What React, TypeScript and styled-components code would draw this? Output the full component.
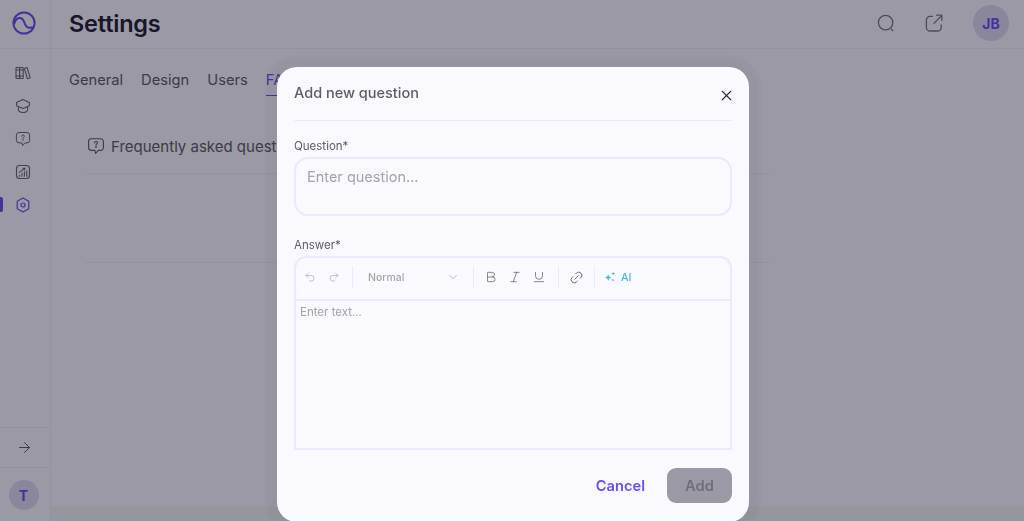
import React from "react";
import styled, { createGlobalStyle } from "styled-components";
import {
  ArrowRight,
  Bold,
  ChevronDown,
  Italic,
  Link2,
  Redo2,
  Underline,
  Undo2,
  X,
} from "lucide-react";

const GlobalStyle = createGlobalStyle`
  html, body {
    margin: 0;
    height: 100%;
    overflow: hidden;
    background: #faf9ff;
    font-family: "Inter", "Noto Sans", sans-serif;
  }
  * { box-sizing: border-box; }
`;

const tabs = ["General", "Design", "Users", "FAQ"];

// small hand drawn icons for the side bar and header
const BooksIcon = () => (
  <svg width="16" height="16" viewBox="0 0 16 16" fill="none" stroke="currentColor" strokeWidth="1.1">
    <rect x="1" y="2.5" width="3.6" height="11" rx="0.6" />
    <rect x="4.6" y="2.5" width="3.6" height="11" rx="0.6" />
    <path d="M9.4 3.4l2.6-1 3.2 10.4-2.8 1z" strokeLinejoin="round" />
    <path d="M1 5h7.2M1 11h7.2" />
  </svg>
);

const CapIcon = () => (
  <svg width="16" height="16" viewBox="0 0 16 16" fill="none" stroke="currentColor" strokeWidth="1.1" strokeLinejoin="round">
    <path d="M8 1.4l6.4 3.2v3.2L8 10.4 1.6 7.8V4.6z" />
    <path d="M3.4 8.8v2.8c0 1.8 2 2.9 4.6 2.9s4.6-1.1 4.6-2.9V8.8" />
  </svg>
);

const FaqIcon = ({ size = 16 }: { size?: number }) => (
  <svg width={size} height={size} viewBox="0 0 16 16" fill="none" stroke="currentColor" strokeWidth="1">
    <path d="M4 1.5h8a2.6 2.6 0 0 1 2.6 2.6v5.2A2.6 2.6 0 0 1 12 11.9h-1.8L7.6 14.6l-.6-2.7H4a2.6 2.6 0 0 1-2.6-2.6V4.1A2.6 2.6 0 0 1 4 1.5z" strokeLinejoin="round" />
    <path d="M6.7 5.2c.1-.8.7-1.2 1.4-1.2.8 0 1.3.5 1.3 1.1 0 1-1.4 1-1.4 2.1" strokeLinecap="round" />
    <circle cx="8" cy="8.9" r="0.3" fill="currentColor" />
  </svg>
);

const ChartIcon = () => (
  <svg width="16" height="16" viewBox="0 0 16 16" fill="none" stroke="currentColor" strokeWidth="1.1" strokeLinecap="round">
    <rect x="1.5" y="1.5" width="13" height="13" rx="3" />
    <path d="M4.5 12.2v-1M7 12.2V9.4M9.4 12.2V7.8M11.8 12.2V6.8" />
    <path d="M4.2 8.4l5.4-3.8M8 4.2h1.8v1.6" />
  </svg>
);

const GearIcon = () => (
  <svg width="16" height="16" viewBox="0 0 16 16" fill="none" stroke="currentColor" strokeWidth="1.2" strokeLinejoin="round">
    <path d="M8 1l5.8 3.3v7.4L8 15l-5.8-3.3V4.3z" />
    <circle cx="8" cy="8" r="2" />
  </svg>
);

const SearchIcon = () => (
  <svg width="18" height="18" viewBox="0 0 18 18" fill="none" stroke="currentColor" strokeWidth="1.3" strokeLinecap="round">
    <circle cx="8.6" cy="8.6" r="7.2" />
    <path d="M14.4 15.2l1.4 1.4" />
  </svg>
);

const ShareIcon = () => (
  <svg width="18" height="18" viewBox="0 0 18 18" fill="none" stroke="currentColor" strokeWidth="1.3" strokeLinecap="round" strokeLinejoin="round">
    <path d="M7.5 2.4H5a3.6 3.6 0 0 0-3.6 3.6v7.4A3.6 3.6 0 0 0 5 17h7.6a3.6 3.6 0 0 0 3.6-3.6V11" />
    <path d="M9 9.4L16.6 1.6M11.6 1.2h5.2v5" />
  </svg>
);

const Logo = () => (
  <svg width="24" height="24" viewBox="0 0 24 24" fill="none" stroke="#6b4ff5" strokeWidth="2">
    <circle cx="12" cy="12" r="10.6" />
    <path d="M2.2 13C3 8.5 6 6.5 8.5 7c3 .6 3.5 3.5 4.3 5.6 1.2 3.4 4.2 5.4 8.2 3.4" />
  </svg>
);

const SparkIcon = () => (
  <svg width="12" height="12" viewBox="0 0 12 12" fill="#4fb3e8">
    <path d="M4.2 3.4l1 2.2 2.2 1-2.2 1-1 2.2-1-2.2-2.2-1 2.2-1z" />
    <path d="M9.2.8l.6 1.2 1.2.6-1.2.6-.6 1.2-.6-1.2-1.2-.6 1.2-.6z" />
    <path d="M9 7.4l.5 1 1 .5-1 .5-.5 1-.5-1-1-.5 1-.5z" />
  </svg>
);

function App() {
  return (
    <>
      <GlobalStyle />
      <Shell>
        <Sidebar>
          <LogoBox>
            <Logo />
          </LogoBox>
          <SideNav>
            <SideItem><BooksIcon /></SideItem>
            <SideItem><CapIcon /></SideItem>
            <SideItem><FaqIcon /></SideItem>
            <SideItem><ChartIcon /></SideItem>
            <SideItem $active><GearIcon /></SideItem>
          </SideNav>
          <Collapse>
            <ArrowRight size={17} strokeWidth={1.3} />
          </Collapse>
          <UserBox>
            <Avatar $size={30}>T</Avatar>
          </UserBox>
        </Sidebar>
        <Main>
          <Header>
            <Title>Settings</Title>
            <HeaderTools>
              <SearchIcon />
              <ShareIcon />
              <Avatar $size={36}>JB</Avatar>
            </HeaderTools>
          </Header>
          <TabRow>
            {tabs.map((t) => (
              <Tab key={t} $active={t === "FAQ"}>{t}</Tab>
            ))}
          </TabRow>
          <FaqSection>
            <FaqHeading>
              <FaqIcon size={18} />
              Frequently asked questions
            </FaqHeading>
            <FaqRow />
          </FaqSection>
          <BottomBand />
        </Main>
      </Shell>

      <Overlay>
        <Modal>
          <ModalHead>
            <ModalTitle>Add new question</ModalTitle>
            <CloseButton>
              <X size={17} strokeWidth={1.6} />
            </CloseButton>
          </ModalHead>

          <Label>Question*</Label>
          <QuestionInput placeholder="Enter question..." />

          <AnswerLabel>Answer*</AnswerLabel>
          <Editor>
            <Toolbar>
              <ToolGroup $width={57} $pad={8} $gap={12}>
                <Undo2 size={12} strokeWidth={1.3} />
                <Redo2 size={12} strokeWidth={1.3} />
              </ToolGroup>
              <FormatSelect>
                Normal
                <ChevronDown size={14} strokeWidth={1.3} />
              </FormatSelect>
              <ToolGroup $width={85} $pad={10} $gap={10} $dark>
                <Bold size={14} strokeWidth={1.4} />
                <Italic size={14} strokeWidth={1.4} />
                <Underline size={14} strokeWidth={1.4} />
              </ToolGroup>
              <ToolGroup $width={36} $pad={10} $gap={0} $dark>
                <Link2 size={15} strokeWidth={1.5} style={{ transform: "rotate(-45deg)" }} />
              </ToolGroup>
              <AiButton>
                <SparkIcon />
                AI
              </AiButton>
            </Toolbar>
            <EditorBody placeholder="Enter text..." />
          </Editor>

          <Footer>
            <CancelButton>Cancel</CancelButton>
            <AddButton disabled>Add</AddButton>
          </Footer>
        </Modal>
      </Overlay>
    </>
  );
}

export default App;

const Shell = styled.div`
  display: flex;
  height: 521px;
  width: 1024px;
  background: #faf9ff;
`;

const Sidebar = styled.aside`
  width: 51px;
  flex: none;
  display: flex;
  flex-direction: column;
  border-right: 1px solid #efedf8;
`;

const LogoBox = styled.div`
  height: 49px;
  display: flex;
  align-items: center;
  justify-content: center;
  padding-right: 2px;
  padding-bottom: 2px;
  border-bottom: 1px solid #efedf8;
`;

const SideNav = styled.nav`
  flex: 1;
  display: flex;
  flex-direction: column;
  padding-top: 8px;
`;

const SideItem = styled.div<{ $active?: boolean }>`
  height: 32.8px;
  display: flex;
  align-items: center;
  justify-content: center;
  padding-right: 5px;
  position: relative;
  color: ${(p) => (p.$active ? "#6b4ff5" : "#6a6775")};

  &::before {
    content: "";
    display: ${(p) => (p.$active ? "block" : "none")};
    position: absolute;
    left: 0;
    top: 9px;
    width: 3px;
    height: 15px;
    border-radius: 0 2px 2px 0;
    background: #6b4ff5;
  }
`;

const Collapse = styled.div`
  height: 41px;
  display: flex;
  align-items: center;
  justify-content: center;
  padding-right: 2px;
  color: #55525f;
  border-top: 1px solid #efedf8;
  border-bottom: 1px solid #efedf8;
`;

const UserBox = styled.div`
  height: 53px;
  display: flex;
  justify-content: center;
  padding-top: 12px;
  padding-right: 3px;
`;

const Avatar = styled.div<{ $size: number }>`
  width: ${(p) => p.$size}px;
  height: ${(p) => p.$size}px;
  border-radius: 50%;
  display: flex;
  align-items: center;
  justify-content: center;
  background: #dedbf6;
  color: #6b4ff5;
  font-size: 14px;
  font-weight: 700;
`;

const Main = styled.main`
  flex: 1;
  min-width: 0;
  display: flex;
  flex-direction: column;
`;

const Header = styled.header`
  height: 49px;
  flex: none;
  display: flex;
  align-items: center;
  justify-content: space-between;
  padding: 0 15px 1px 18px;
  border-bottom: 1px solid #efedf8;
`;

const Title = styled.h1`
  margin: 0;
  font-size: 23.5px;
  font-weight: 600;
  letter-spacing: -0.2px;
  color: #221d38;
`;

const HeaderTools = styled.div`
  display: flex;
  align-items: center;
  gap: 30px;
  margin-bottom: 1px;
  color: #7b7887;
`;

const TabRow = styled.div`
  display: flex;
  gap: 18px;
  padding: 22px 0 0 18px;
`;

const Tab = styled.div<{ $active?: boolean }>`
  font-size: 14.7px;
  line-height: 18px;
  padding-bottom: 6px;
  color: ${(p) => (p.$active ? "#6b4ff5" : "#5f5c6a")};
  border-bottom: 1px solid ${(p) => (p.$active ? "#6b4ff5" : "transparent")};
`;

const FaqSection = styled.section`
  flex: 1;
  margin: 27px 254px 0 34px;
  color: #5f5c6a;
`;

const FaqHeading = styled.div`
  display: flex;
  align-items: center;
  gap: 6px;
  font-size: 15px;
  height: 51px;
  padding-bottom: 4px;
  padding-left: 2px;
  border-bottom: 1px solid #efedf8;
`;

const FaqRow = styled.div`
  height: 89px;
  border-bottom: 1px solid #efedf8;
`;

const BottomBand = styled.div`
  height: 15px;
  flex: none;
  background: #f4f3f9;
`;

const Overlay = styled.div`
  position: fixed;
  inset: 0;
  display: flex;
  justify-content: center;
  padding: 67px 0 0 2px;
  background: rgba(12, 9, 25, 0.4);
`;

const Modal = styled.div`
  width: 472px;
  height: 455px;
  display: flex;
  flex-direction: column;
  padding: 0 17px;
  background: #faf9ff;
  border-radius: 20px;
  box-shadow: 0 0 4px 11px rgba(12, 9, 25, 0.03);
`;

const ModalHead = styled.div`
  height: 54px;
  flex: none;
  display: flex;
  align-items: center;
  justify-content: space-between;
  border-bottom: 1px solid #eceafb;
`;

const ModalTitle = styled.h2`
  margin: 0 0 3px;
  font-size: 14.5px;
  font-weight: 500;
  color: #5f5c6a;
`;

const CloseButton = styled.button`
  display: flex;
  border: none;
  padding: 0;
  margin: 4px -3px 0 0;
  background: none;
  color: #2b2838;
`;

const Label = styled.label`
  display: block;
  margin-top: 18px;
  font-size: 11.5px;
  line-height: 15px;
  color: #5f5c6a;
`;

const AnswerLabel = styled(Label)`
  margin-top: 22px;
`;

const QuestionInput = styled.textarea`
  display: block;
  width: 100%;
  height: 59px;
  flex: none;
  margin-top: 3px;
  padding: 9px 11px;
  resize: none;
  outline: none;
  font: inherit;
  font-size: 14.5px;
  background: transparent;
  border: 2px solid #ebe8ff;
  border-radius: 14px;

  &::placeholder {
    color: #a5a3ad;
    opacity: 1;
  }
`;

const Editor = styled.div`
  margin-top: 3px;
  height: 194px;
  flex: none;
  display: flex;
  flex-direction: column;
`;

const Toolbar = styled.div`
  height: 43px;
  flex: none;
  display: flex;
  align-items: center;
  padding-bottom: 3px;
  border: 2px solid #ebe8ff;
  border-bottom: none;
  border-radius: 12px 12px 0 0;
`;

const ToolGroup = styled.div<{ $width: number; $pad: number; $gap: number; $dark?: boolean }>`
  width: ${(p) => p.$width}px;
  height: 22px;
  flex: none;
  display: flex;
  align-items: center;
  gap: ${(p) => p.$gap}px;
  padding-left: ${(p) => p.$pad}px;
  color: ${(p) => (p.$dark ? "#6f6c7c" : "#a5a3ad")};
  border-right: 1px solid #eceafb;
`;

const FormatSelect = styled.div`
  width: 121px;
  height: 22px;
  flex: none;
  display: flex;
  align-items: center;
  justify-content: space-between;
  padding: 0 13px 0 15px;
  font-size: 10.5px;
  font-weight: 500;
  color: #a5a3ad;
  border-right: 1px solid #eceafb;
`;

const AiButton = styled.div`
  display: flex;
  align-items: center;
  gap: 5px;
  padding-left: 9px;
  font-size: 10.5px;
  font-weight: 500;
  color: #4fb3e8;
`;

const EditorBody = styled.textarea`
  flex: 1;
  padding: 4px;
  resize: none;
  outline: none;
  font: inherit;
  font-size: 11.5px;
  background: transparent;
  border: 2px solid #ebe8ff;

  &::placeholder {
    color: #a5a3ad;
    opacity: 1;
  }
`;

const Footer = styled.div`
  display: flex;
  align-items: center;
  justify-content: flex-end;
  gap: 22px;
  margin-top: 18px;
`;

const CancelButton = styled.button`
  border: none;
  padding: 0;
  background: none;
  font: inherit;
  font-size: 14.7px;
  font-weight: 600;
  color: #6b4ff5;
`;

const AddButton = styled.button`
  width: 65px;
  height: 35px;
  border: none;
  border-radius: 9px;
  background: #9b99a3;
  font: inherit;
  font-size: 14.7px;
  font-weight: 600;
  color: #6f6d78;
`;
